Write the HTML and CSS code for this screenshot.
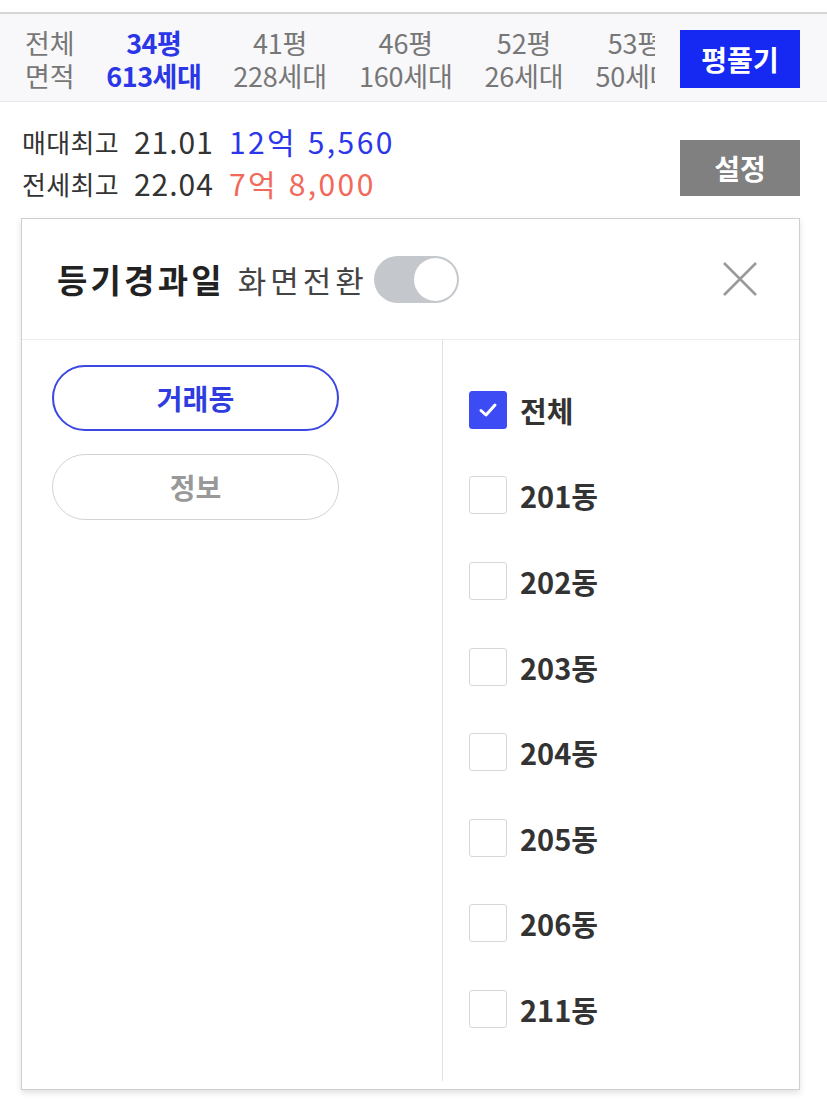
FILE: index.html
```
<!DOCTYPE html>
<html lang="ko">
<head>
<meta charset="utf-8">
<link rel="stylesheet" href="styles.css">
</head>
<body>
<div class="topbar">
  <div class="areas">
    <div class="area"><span>전체</span><span>면적</span></div>
    <div class="area active"><span>34평</span><span>613세대</span></div>
    <div class="area"><span>41평</span><span>228세대</span></div>
    <div class="area"><span>46평</span><span>160세대</span></div>
    <div class="area"><span>52평</span><span>26세대</span></div>
    <div class="area"><span>53평</span><span>50세대</span></div>
  </div>
  <button class="btn-pyeong">평풀기</button>
</div>

<div class="stats">
  <div class="stat-rows">
    <div class="stat-row"><span class="label">매대최고</span><span class="date">21.01</span><span class="price blue">12억 5,560</span></div>
    <div class="stat-row"><span class="label">전세최고</span><span class="date">22.04</span><span class="price red">7억 8,000</span></div>
  </div>
  <button class="btn-set">설정</button>
</div>

<div class="panel">
  <div class="panel-head">
    <span class="title">등기경과일</span>
    <span class="switch-label">화면전환</span>
    <span class="toggle"><span class="knob"></span></span>
    <svg class="close" width="36" height="36" viewBox="0 0 36 36"><path d="M2 2 L34 34 M34 2 L2 34" stroke="#9a9a9a" stroke-width="2.6" fill="none"/></svg>
  </div>
  <div class="panel-body">
    <div class="left-col">
      <button class="pill active">거래동</button>
      <button class="pill">정보</button>
    </div>
    <div class="right-col">
      <label class="check-row"><span class="box checked"><svg width="22" height="22" viewBox="0 0 22 22"><path d="M4 11.5 L9 16 L18 6" stroke="#fff" stroke-width="3" fill="none" stroke-linecap="round" stroke-linejoin="round"/></svg></span><span class="check-text">전체</span></label>
      <label class="check-row"><span class="box"></span><span class="check-text">201동</span></label>
      <label class="check-row"><span class="box"></span><span class="check-text">202동</span></label>
      <label class="check-row"><span class="box"></span><span class="check-text">203동</span></label>
      <label class="check-row"><span class="box"></span><span class="check-text">204동</span></label>
      <label class="check-row"><span class="box"></span><span class="check-text">205동</span></label>
      <label class="check-row"><span class="box"></span><span class="check-text">206동</span></label>
      <label class="check-row"><span class="box"></span><span class="check-text">211동</span></label>
    </div>
  </div>
</div>
</body>
</html>
```
FILE: styles.css
```
* { box-sizing: border-box; }
html, body { margin: 0; padding: 0; background: #fff; }
body {
  width: 827px;
  height: 1102px;
  overflow: hidden;
  font-family: "Noto Sans CJK KR", "Noto Sans", sans-serif;
  color: #333;
  padding-top: 12px;
}
button { font-family: inherit; cursor: pointer; }

.topbar {
  display: flex;
  align-items: center;
  height: 90px;
  border-top: 2px solid #d6d6d6;
  border-bottom: 1px solid #e6e6e6;
  background: #f8f8fa;
  padding: 3px 27px 0 0;
}
.areas {
  flex: 1;
  display: flex;
  gap: 32px;
  padding: 6px 0 6px 25px;
  margin: -6px 0;
  overflow: hidden;
  white-space: nowrap;
}
.area {
  flex: none;
  display: flex;
  flex-direction: column;
  align-items: center;
  font-size: 27px;
  line-height: 33px;
  color: #777;
  letter-spacing: -0.2px;
}
.area.active { color: #2b36e6; font-weight: 700; letter-spacing: -0.5px; }
.btn-pyeong {
  flex: none;
  width: 120px;
  height: 58px;
  margin-left: 25px;
  border: 0;
  background: #1629f2;
  color: #fff;
  font-size: 28px;
  font-weight: 700;
  padding: 0;
}

.stats {
  display: flex;
  justify-content: space-between;
  align-items: flex-start;
  padding: 18px 27px 0 22px;
  height: 116px;
}
.stat-rows { display: flex; flex-direction: column; }
.stat-row {
  display: flex;
  align-items: center;
  height: 42px;
  gap: 15px;
}
.label { font-size: 26px; color: #333; letter-spacing: 0.3px; }
.date { font-size: 30px; color: #333; letter-spacing: 1px; }
.price { font-size: 30px; letter-spacing: 2.4px; }
.blue { color: #2c37ea; }
.red { color: #f2695a; }
.btn-set {
  margin-top: 20px;
  width: 120px;
  height: 56px;
  border: 0;
  background: #808080;
  color: #fff;
  font-size: 28px;
  font-weight: 700;
  padding: 0;
}

.panel {
  margin: 0 27px 0 21px;
  height: 872px;
  border: 1px solid #cfcfcf;
  box-shadow: 0 3px 6px rgba(0,0,0,0.12);
  display: flex;
  flex-direction: column;
}
.panel-head {
  height: 121px;
  flex: none;
  display: flex;
  align-items: center;
  padding: 0 41px 0 35px;
  border-bottom: 1px solid #ececec;
}
.title { font-size: 33px; font-weight: 700; color: #222; letter-spacing: 3.2px; }
.switch-label { font-size: 31px; color: #444; margin-left: 13px; letter-spacing: 4px; }
.toggle {
  margin-left: 6px;
  width: 85px;
  height: 47px;
  border-radius: 24px;
  background: #c4c7cc;
  display: flex;
  align-items: center;
  justify-content: flex-end;
  padding-right: 2px;
}
.knob {
  width: 43px;
  height: 43px;
  border-radius: 50%;
  background: #fff;
}
.close { margin-left: auto; }

.panel-body {
  flex: 1;
  display: flex;
  padding-bottom: 8px;
}
.left-col {
  width: 421px;
  border-right: 1px solid #e3e3e3;
  padding: 25px 0 0 30px;
  display: flex;
  flex-direction: column;
  gap: 23px;
}
.pill {
  width: 287px;
  height: 66px;
  border-radius: 33px;
  background: #fff;
  border: 1.5px solid #d3d3d3;
  color: #999;
  font-size: 28px;
  font-weight: 700;
  padding: 0;
}
.pill.active { border: 2px solid #3a47e2; color: #2f3ce0; }

.right-col {
  flex: 1;
  padding: 29px 0 0 26px;
  display: flex;
  flex-direction: column;
}
.check-row {
  display: flex;
  align-items: center;
  height: 85.6px;
  padding-bottom: 4px;
}
.box {
  flex: none;
  width: 38px;
  height: 38px;
  border: 1.5px solid #d7d7d7;
  border-radius: 3px;
  background: #fff;
  display: flex;
  align-items: center;
  justify-content: center;
}
.box.checked { background: #3d4bf5; border-color: #3d4bf5; }
.check-text {
  margin-left: 13px;
  font-size: 29px;
  font-weight: 700;
  color: #333;
}
```
